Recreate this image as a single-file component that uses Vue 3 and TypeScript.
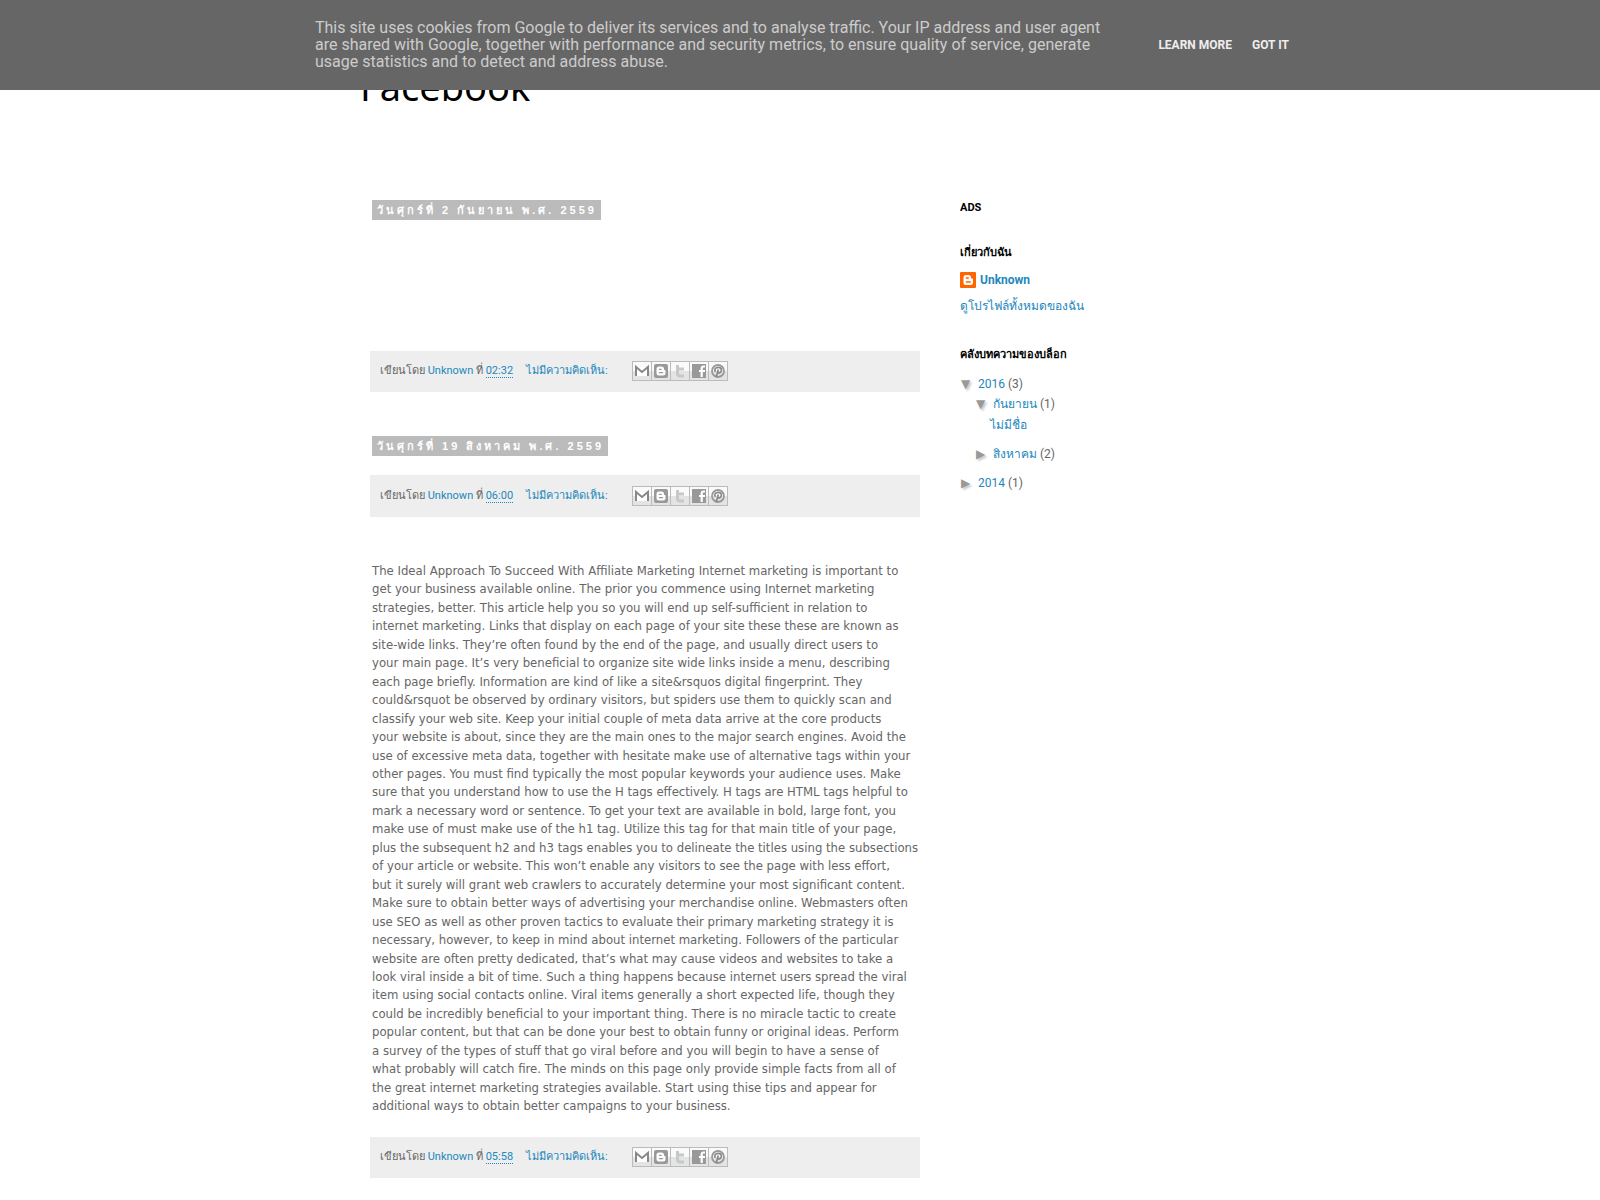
<script setup lang="ts">
interface Post {
  id: number
  date?: string
  time: string
  body: string
  kind: string
}

interface ArchiveRow {
  label: string
  count?: number
  level: string
  arrow?: string
}

const article = `The Ideal Approach To Succeed With Affiliate Marketing Internet marketing is important to
get your business available online. The prior you commence using Internet marketing
strategies, better. This article help you so you will end up self-sufficient in relation to
internet marketing. Links that display on each page of your site these these are known as
site-wide links. They’re often found by the end of the page, and usually direct users to
your main page. It’s very beneficial to organize site wide links inside a menu, describing
each page briefly. Information are kind of like a site&rsquos digital fingerprint. They
could&rsquot be observed by ordinary visitors, but spiders use them to quickly scan and
classify your web site. Keep your initial couple of meta data arrive at the core products
your website is about, since they are the main ones to the major search engines. Avoid the
use of excessive meta data, together with hesitate make use of alternative tags within your
other pages. You must find typically the most popular keywords your audience uses. Make
sure that you understand how to use the H tags effectively. H tags are HTML tags helpful to
mark a necessary word or sentence. To get your text are available in bold, large font, you
make use of must make use of the h1 tag. Utilize this tag for that main title of your page,
plus the subsequent h2 and h3 tags enables you to delineate the titles using the subsections
of your article or website. This won’t enable any visitors to see the page with less effort,
but it surely will grant web crawlers to accurately determine your most significant content.
Make sure to obtain better ways of advertising your merchandise online. Webmasters often
use SEO as well as other proven tactics to evaluate their primary marketing strategy it is
necessary, however, to keep in mind about internet marketing. Followers of the particular
website are often pretty dedicated, that’s what may cause videos and websites to take a
look viral inside a bit of time. Such a thing happens because internet users spread the viral
item using social contacts online. Viral items generally a short expected life, though they
could be incredibly beneficial to your important thing. There is no miracle tactic to create
popular content, but that can be done your best to obtain funny or original ideas. Perform
a survey of the types of stuff that go viral before and you will begin to have a sense of
what probably will catch fire. The minds on this page only provide simple facts from all of
the great internet marketing strategies available. Start using thise tips and appear for
additional ways to obtain better campaigns to your business.`

const posts: Post[] = [
  { id: 1, date: 'วันศุกร์ที่ 2 กันยายน พ.ศ. 2559', time: '02:32', body: '', kind: 'blank' },
  { id: 2, date: 'วันศุกร์ที่ 19 สิงหาคม พ.ศ. 2559', time: '06:00', body: '', kind: 'short' },
  { id: 3, time: '05:58', body: article, kind: 'full' },
]

const archive: ArchiveRow[] = [
  { label: '2016', count: 3, level: 'year', arrow: '▼' },
  { label: 'กันยายน', count: 1, level: 'month', arrow: '▼' },
  { label: 'ไม่มีชื่อ', level: 'entry' },
  { label: 'สิงหาคม', count: 2, level: 'month last', arrow: '▶' },
  { label: '2014', count: 1, level: 'year', arrow: '▶' },
]

const shares = ['email', 'blogger', 'twitter', 'facebook', 'pinterest']
</script>

<template>
  <div class="page">
    <div class="cookie">
      <div class="cookie-inner">
        <p class="cookie-text">
          This site uses cookies from Google to deliver its services and to analyse traffic. Your IP address and user agent are shared with Google, together with performance and security metrics, to ensure quality of service, generate usage statistics and to detect and address abuse.
        </p>
        <div class="cookie-actions">
          <a href="#learn">LEARN MORE</a>
          <a href="#ok">GOT IT</a>
        </div>
      </div>
    </div>

    <div class="content">
      <header><h1>Facebook</h1></header>
      <div class="columns">
        <main>
          <article v-for="post in posts" :key="post.id" :class="post.kind">
            <h2 v-if="post.date" class="date"><span>{{ post.date }}</span></h2>
            <div class="body">{{ post.body }}</div>
            <footer>
              <span class="author">เขียนโดย <a href="#author">Unknown</a> ที่ <a href="#post"><abbr>{{ post.time }}</abbr></a></span>
              <a class="comments" href="#comments">ไม่มีความคิดเห็น:</a>
              <span class="shares">
                <a v-for="s in shares" :key="s" href="#share" :aria-label="s">
                  <svg viewBox="0 0 18 18" width="18" height="18">
                    <template v-if="s === 'email'">
                      <path d="M3 5h12v9H3z" fill="#fff" />
                      <path d="M3 14V5l6 5 6-5v9" fill="none" stroke="#888" stroke-width="2" />
                    </template>
                    <template v-else-if="s === 'blogger'">
                      <rect x="2" y="2" width="14" height="14" rx="2" fill="#999" />
                      <path d="M7 4.500h2.500a2.500 2.500 0 0 1 2.500 2.500c0 .8.300 1 .8 1 .5 0 .7.300.7.800V11a2.500 2.500 0 0 1-2.500 2.500H7A2.500 2.500 0 0 1 4.500 11V7A2.500 2.500 0 0 1 7 4.500z" fill="#fff" />
                      <path d="M7.400 7.300h1.800M7.400 10.700h3.200" stroke="#999" stroke-width="1.300" stroke-linecap="round" />
                    </template>
                    <template v-else-if="s === 'twitter'">
                      <path d="M6.500 3v8.200q0 2.800 2.800 2.800H13M6.500 7H13" fill="none" stroke="#c5c9c9" stroke-width="3" />
                    </template>
                    <template v-else-if="s === 'facebook'">
                      <path d="M2 2h14v14H2z" fill="#999" />
                      <path d="M15 4.500h-1.500q-1.800 0-1.800 1.800V15M9 9h6" fill="none" stroke="#fff" stroke-width="2.200" />
                    </template>
                    <template v-else>
                      <circle cx="9" cy="9" r="6" fill="none" stroke="#999" stroke-width="1.800" />
                      <path d="M6.300 9.800C4.900 7.300 6.800 5.300 9.200 5.300c2.500 0 3.600 1.700 3.100 3.600-.5 2-2.500 2.700-3.600 1.400M9.300 7.500L7.300 15" fill="none" stroke="#888" stroke-width="1.700" />
                    </template>
                  </svg>
                </a>
              </span>
            </footer>
          </article>
        </main>

        <aside>
          <section><h2>ADS</h2></section>
          <section>
            <h2>เกี่ยวกับฉัน</h2>
            <a class="profile" href="#profile">
              <svg viewBox="0 0 16 16" width="16" height="16" aria-hidden="true">
                <rect width="16" height="16" rx="1" fill="#f60" />
                <path d="M6 3h2.500a2.500 2.500 0 0 1 2.500 2.500c0 .8.400 1 1 1s1 .3 1 .8v3.200A2.500 2.500 0 0 1 10.500 13H6a2.500 2.500 0 0 1-2.500-2.500v-5A2.500 2.500 0 0 1 6 3z" fill="#fff" />
                <path d="M6.300 6h2M6.300 10h4" stroke="#f60" stroke-width="1.300" stroke-linecap="round" />
              </svg>
              Unknown
            </a>
            <a class="profile-link" href="#profile">ดูโปรไฟล์ทั้งหมดของฉัน</a>
          </section>
          <section>
            <h2>คลังบทความของบล็อก</h2>
            <ul>
              <li v-for="row in archive" :key="row.label" :class="row.level">
                <span v-if="row.arrow" class="arrow">{{ row.arrow }}</span>
                <a href="#archive">{{ row.label }}</a>
                <span v-if="row.count">&nbsp;({{ row.count }})</span>
              </li>
            </ul>
          </section>
        </aside>
      </div>
    </div>
  </div>
</template>

<style>
body {
  margin: 0;
  background: #fff;
}
</style>

<style scoped>
.page {
  font-family: "Trebuchet MS", Roboto, "DejaVu Sans", sans-serif;
  font-size: 12px;
  color: #666;
}

a {
  color: #28b;
  text-decoration: none;
}

h1,
h2,
p,
ul {
  margin: 0;
  padding: 0;
  list-style: none;
}

.cookie {
  position: fixed;
  z-index: 2;
  top: 0;
  left: 0;
  right: 0;
  padding: 19px 0 20px 4px;
  background: #666;
  font-family: Roboto, sans-serif;
}

.cookie-inner {
  display: flex;
  justify-content: space-between;
  align-items: center;
  max-width: 974px;
  margin: 0 auto;
}

.cookie-text {
  max-width: 790px;
  font-size: 16px;
  line-height: 17px;
  color: #ccc;
}

.cookie-actions {
  display: flex;
  gap: 20px;
  font-size: 12px;
  font-weight: 700;
  white-space: nowrap;
}

.cookie-actions a {
  color: #eee;
}

.content {
  max-width: 860px;
  margin: 0 auto;
}

header {
  height: 140px;
  padding-top: 60px;
}

h1 {
  margin-left: -10px;
  font-family: "Trebuchet MS", "Noto Sans", sans-serif;
  font-size: 38px;
  font-weight: 400;
  line-height: 52px;
  color: #000;
}

.columns {
  display: grid;
  grid-template-columns: minmax(0, 550fr) minmax(0, 270fr);
  gap: 40px;
}

article {
  margin-bottom: 44px;
}

.date {
  display: flex;
  padding-left: 2px;
}

.date span {
  padding: 0 4px 0 5px;
  background: #bbb;
  color: #fff;
  font-family: "Liberation Sans", sans-serif;
  font-size: 11px;
  line-height: 20px;
  letter-spacing: 3px;
}

.body {
  padding: 0 2px;
  font-family: "Trebuchet MS", "DejaVu Sans Condensed", "DejaVu Sans", sans-serif;
  font-size: 13px;
  line-height: 1.42;
  white-space: pre;
}

.blank .body {
  height: 131px;
}

.short .body {
  height: 19px;
}

.full .body {
  padding-top: 1px;
  padding-bottom: 21px;
}

footer {
  display: flex;
  align-items: center;
  height: 41px;
  padding-left: 10px;
  background: #eee;
  font-size: 11px;
  line-height: 16px;
  white-space: nowrap;
}

.short footer {
  height: 42px;
}

.author,
.comments {
  margin-bottom: 1px;
}

.shares {
  display: flex;
  margin-bottom: 1px;
}

abbr {
  border-bottom: 1px dotted #28b;
}

.comments {
  margin-left: 13px;
  margin-right: 24px;
}

.shares a {
  display: flex;
  margin-right: -1px;
  border: 1px solid #bbb;
  background: linear-gradient(#fafafa 50%, #e4e4e4 50%);
}

aside section {
  margin-bottom: 29px;
}

aside h2 {
  font-size: 11px;
  line-height: 16px;
  color: #000;
}

.profile {
  display: flex;
  align-items: center;
  gap: 4px;
  margin: 11px 0 8px;
  font-weight: 700;
  line-height: 16px;
}

.profile-link {
  display: block;
  padding-bottom: 2px;
  line-height: 20px;
}

ul {
  margin-top: 11px;
}

li {
  display: flex;
  line-height: 20px;
}

.year {
  padding-left: 1px;
}

.month {
  padding-left: 16px;
}

.entry {
  padding-left: 30px;
  line-height: 22px;
  margin-bottom: 8px;
}

.last {
  margin-bottom: 9px;
}

.arrow {
  width: 17px;
  color: #999;
  text-shadow: 2px 2px 2px #ccc;
}
</style>
